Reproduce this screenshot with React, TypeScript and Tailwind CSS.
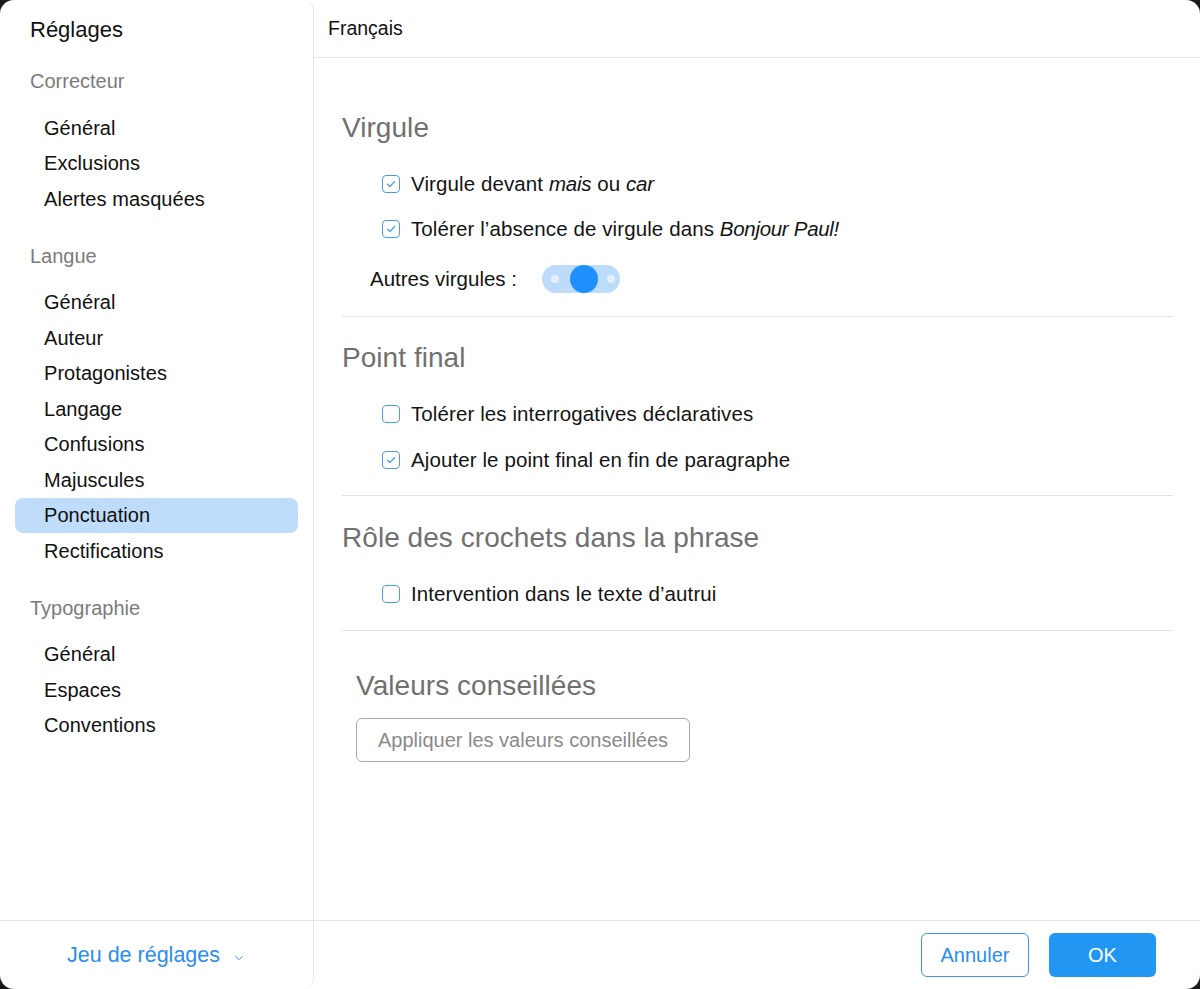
import { ChevronDown } from "lucide-react";

interface NavGroup {
    title: string;
    items: string[];
}

const navGroups: NavGroup[] = [
    { title: "Correcteur", items: ["Général", "Exclusions", "Alertes masquées"] },
    {
        title: "Langue",
        items: [
            "Général",
            "Auteur",
            "Protagonistes",
            "Langage",
            "Confusions",
            "Majuscules",
            "Ponctuation",
            "Rectifications",
        ],
    },
    { title: "Typographie", items: ["Général", "Espaces", "Conventions"] },
];

function Checkbox({ checked }: { checked: boolean }) {
    return (
        <span className="w-[18px] h-[18px] shrink-0 rounded-[4px] border-[1.5px] border-[#4b9cf0] bg-white flex items-center justify-center">
            {checked && (
                <svg width="10" height="8" viewBox="0 0 10 8" fill="none">
                    <path
                        d="M1.5 4.2 L4 6.5 L8.6 1.5"
                        stroke="#4b9cf0"
                        strokeWidth="1.2"
                        strokeLinecap="round"
                        strokeLinejoin="round"
                    />
                </svg>
            )}
        </span>
    );
}

function CheckRow({
    checked,
    className,
    children,
}: {
    checked: boolean;
    className?: string;
    children: React.ReactNode;
}) {
    return (
        <label
            className={`flex items-center h-6 pl-10 gap-[11px] text-[20.5px] tracking-[0.1px] text-[#141414] ${className ?? ""}`}
        >
            <Checkbox checked={checked} />
            <span className="leading-6 whitespace-nowrap">{children}</span>
        </label>
    );
}

function Toggle() {
    return (
        <div className="relative w-[78px] h-7 rounded-full bg-[#bddcfb] flex items-center">
            <span className="absolute left-[9px] w-2 h-2 rounded-full bg-[#e4f0fd]" />
            <span className="absolute right-[5px] w-2 h-2 rounded-full bg-[#e4f0fd]" />
            <span className="absolute left-[28px] w-7 h-7 rounded-full bg-[#1f8ffb]" />
        </div>
    );
}

function SectionTitle({ children, className }: { children: React.ReactNode; className?: string }) {
    return (
        <h2
            className={`text-[28px] tracking-[0.05px] leading-8 text-[#707070] whitespace-nowrap ${className ?? ""}`}
        >
            {children}
        </h2>
    );
}

export default function App() {
    return (
        <div
            className="w-[1200px] h-[989px] bg-[#1b1b1b]"
            style={{ fontFamily: '"Liberation Sans", Arial, sans-serif' }}
        >
            <div className="w-full h-full bg-white rounded-[14px] flex overflow-hidden">
                {/* Sidebar */}
                <aside className="w-[314px] shrink-0 border-r border-[#e6e6e6] rounded-r-[10px] flex flex-col">
                    <nav className="flex-1 pt-[17px]">
                        <div className="pl-[30px] text-[22px] leading-[26px] text-[#111]">Réglages</div>
                        {navGroups.map((group, gi) => (
                            <div key={group.title} className={gi === 0 ? "mt-[26px]" : "mt-[27px]"}>
                                <div className="pl-[30px] text-[20px] leading-6 text-[#7b7b7b]">
                                    {group.title}
                                </div>
                                <ul className="mt-[17px]">
                                    {group.items.map((item) => (
                                        <li
                                            key={item}
                                            className={`mx-[15px] h-[35.5px] pl-[29px] flex items-center rounded-lg text-[20px] tracking-[0.05px] text-[#111] ${
                                                item === "Ponctuation" ? "bg-[#bfdcfb]" : ""
                                            }`}
                                        >
                                            {item}
                                        </li>
                                    ))}
                                </ul>
                            </div>
                        ))}
                    </nav>
                    <div className="h-[69px] shrink-0 border-t border-[#e6e6e6] flex items-center justify-center gap-[12px] text-[#2a8ef0]">
                        <span className="text-[21.5px]">Jeu de réglages</span>
                        <ChevronDown size={14} strokeWidth={1.6} className="mt-[5px]" />
                    </div>
                </aside>

                {/* Main */}
                <main className="flex-1 flex flex-col">
                    <header className="h-[58px] shrink-0 border-b border-[#e6e6e6] pl-[14px] flex items-center">
                        <span className="text-[19.5px] text-[#111]">Français</span>
                    </header>

                    <div className="flex-1 pt-[54px] pl-[28px] pr-[27px]">
                        {/* Virgule */}
                        <SectionTitle>Virgule</SectionTitle>
                        <CheckRow checked className="mt-[28px]">
                            Virgule devant <i className="tracking-[-0.2px]">mais</i> ou{" "}
                            <i className="tracking-[-0.2px]">car</i>
                        </CheckRow>
                        <CheckRow checked className="mt-[21px]">
                            Tolérer l’absence de virgule dans{" "}
                            <i className="tracking-[-0.3px]">Bonjour Paul!</i>
                        </CheckRow>
                        <div className="mt-[24px] pl-[28px] flex items-center gap-[25px] h-7">
                            <span className="text-[20.5px] text-[#141414]">Autres virgules :</span>
                            <Toggle />
                        </div>
                        <hr className="mt-[23px] border-[#e2e2e2]" />

                        {/* Point final */}
                        <SectionTitle className="mt-[25px]">Point final</SectionTitle>
                        <CheckRow checked={false} className="mt-[28px]">
                            Tolérer les interrogatives déclaratives
                        </CheckRow>
                        <CheckRow checked className="mt-[22px]">
                            Ajouter le point final en fin de paragraphe
                        </CheckRow>
                        <hr className="mt-[23px] border-[#e2e2e2]" />

                        {/* Crochets */}
                        <SectionTitle className="mt-[26px]">Rôle des crochets dans la phrase</SectionTitle>
                        <CheckRow checked={false} className="mt-[28px]">
                            Intervention dans le texte d’autrui
                        </CheckRow>
                        <hr className="mt-[24px] border-[#e2e2e2]" />

                        {/* Valeurs conseillées */}
                        <div className="pl-[14px]">
                            <SectionTitle className="mt-[39px]">Valeurs conseillées</SectionTitle>
                            <button className="mt-[16px] h-[44px] w-[334px] rounded-md border border-[#a9a9a9] text-[20px] text-[#8a8a8a]">
                                Appliquer les valeurs conseillées
                            </button>
                        </div>
                    </div>

                    <footer className="h-[69px] shrink-0 border-t border-[#e6e6e6] flex items-center justify-end gap-5 pr-[44px]">
                        <button className="w-[108px] h-[44px] rounded-md border border-[#3796ef] text-[20px] text-[#2a8ef0]">
                            Annuler
                        </button>
                        <button className="w-[107px] h-[44px] rounded-md bg-[#2196f3] text-[20px] text-white">
                            OK
                        </button>
                    </footer>
                </main>
            </div>
        </div>
    );
}
